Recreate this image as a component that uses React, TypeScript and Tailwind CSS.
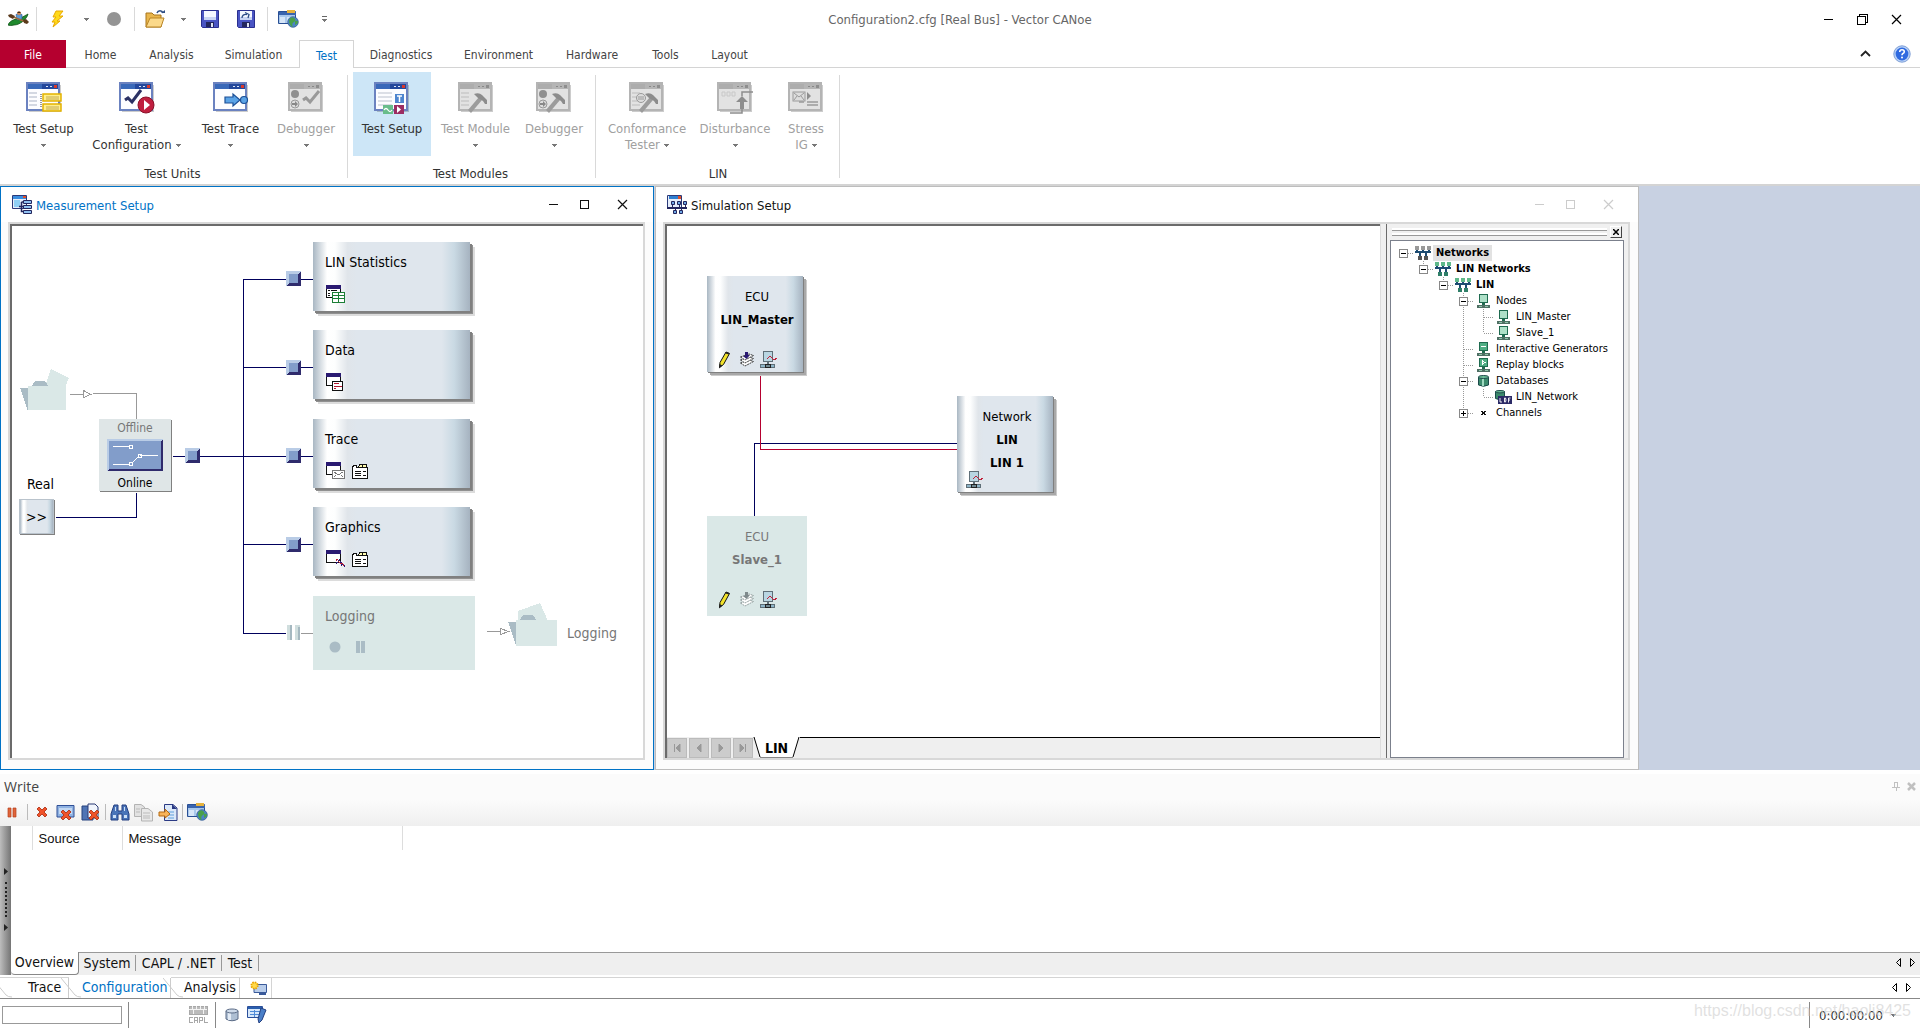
import React from "react";

type Kids = { children?: React.ReactNode };

/* ---------- small glyphs ---------- */

const Caret = ({ className = "" }: { className?: string }) => (
  <svg width="5" height="3" viewBox="0 0 5 3" className={className} shapeRendering="crispEdges">
    <path d="M0 0H5L3 3H2Z" fill="#777" />
  </svg>
);

const Sep = ({ className = "h-6" }: { className?: string }) => (
  <span className={`w-px shrink-0 bg-[#d9d9d9] ${className}`} />
);

const MinIcon = () => (
  <svg width="11" height="11" viewBox="0 0 11 11" shapeRendering="crispEdges">
    <path d="M1 5.5H10" stroke="currentColor" />
  </svg>
);
const MaxIcon = () => (
  <svg width="11" height="11" viewBox="0 0 11 11" shapeRendering="crispEdges">
    <path d="M1.5 1.5H9.5V9.5H1.5Z" stroke="currentColor" fill="none" />
  </svg>
);
const RestoreIcon = () => (
  <svg width="11" height="11" viewBox="0 0 11 11" shapeRendering="crispEdges">
    <path d="M.5 2.5H8.5V10.5H.5ZM2.5 2.5V.5H10.5V8.5H8.5" stroke="currentColor" fill="none" />
  </svg>
);
const CloseIcon = () => (
  <svg width="11" height="11" viewBox="0 0 11 11">
    <path d="M1 1L10 10M10 1L1 10" stroke="currentColor" strokeWidth="1.2" />
  </svg>
);

/* ---------- quick access icons ---------- */

const BoatIcon = () => (
  <svg width="21" height="16" viewBox="0 0 21 16">
    <path d="M0 14C2 9 8 8 12 7C15 6 18 4 20 3C19 8 12 14 6 14Q2 15 0 14Z" fill="#1f8a2d" stroke="#0f5118" strokeWidth=".8" />
    <path d="M8 3.500Q11 1.500 14 3.500L14 8L9 9Z" fill="#5b9bd8" stroke="#27538c" strokeWidth=".6" />
    <circle cx="11" cy="2.300" r="2" fill="#c98a5b" />
    <path d="M9 2q2 -3 4 0z" fill="#3c2a18" />
    <path d="M3 5L18 11" stroke="#a0693a" strokeWidth="1.500" />
    <path d="M0 4L3 3L7 5L5 8L1 6Z" fill="#5b3a1c" />
    <path d="M15 9L18 8L21 11L19 13L16 12Z" fill="#5b3a1c" />
  </svg>
);

const BoltIcon = () => (
  <svg width="14" height="18" viewBox="0 0 14 18">
    <path d="M5 1H12L8 6H12L6 11H9L2 17L4 12H1L5 7H2Z" fill="#ffd91a" stroke="#e8a800" strokeWidth="1" strokeLinejoin="round" />
  </svg>
);

const OpenIcon = () => (
  <svg width="22" height="20" viewBox="0 0 22 20">
    <path d="M2 4h6l2 2h7v12H2z" fill="#e9b64d" stroke="#a8741c" />
    <path d="M2 18L6 9H20L17 18Z" fill="#fbd98a" stroke="#b98526" />
    <path d="M13 4C14 1 18 1 19 4" fill="none" stroke="#2f4f86" strokeWidth="1.5" />
    <path d="M17 4h4v-3z" fill="#2f4f86" />
  </svg>
);

const SaveIcon = ({ arrow = false }: { arrow?: boolean }) => (
  <svg width="18" height="18" viewBox="0 0 18 18">
    <path d="M.5 .5H17.5V17.5H1.5L.5 16.5Z" fill="#4a55c4" stroke="#2a2f8f" />
    <path d="M3 1H15V10H3Z" fill="#f4f7ff" />
    <path d="M3 7H15V10H3Z" fill="#c9d4f3" />
    <path d="M5 12H13V17H5Z" fill="#23265e" />
    <path d="M10 13H12V17H10Z" fill="#dfe4f5" />
    {arrow && (
      <g fill="none" stroke="#2c4c86" strokeWidth="1.300">
        <path d="M5 8Q5 4 10 4.500" />
        <path d="M8 2.500L12 4.500L11 8" />
      </g>
    )}
  </svg>
);

const FolderGlobeIcon = () => (
  <svg width="21" height="18" viewBox="0 0 21 18">
    <path d="M.5 1.5H17.5V13.5H.5Z" fill="#a9c8ec" stroke="#294f94" />
    <path d="M1 2H18V5H1Z" fill="#3a64ad" />
    <path d="M9 0H17V3H9Z" fill="#e6b33e" />
    <path d="M2 7H7V13H2ZM9 7H14V13H9Z" fill="#d7e6f8" />
    <circle cx="15" cy="12" r="5.3" fill="#4c84c6" stroke="#2f568f" strokeWidth=".7" />
    <path d="M11 10q2 -4 5 -2t0 4t-1 5q-4 -1 -4 -7zM17 11q3 -1 3 1t-3 3z" fill="#4aa04a" />
  </svg>
);

const HelpIcon = () => (
  <svg width="18" height="18" viewBox="0 0 18 18">
    <circle cx="9" cy="9" r="8.2" fill="#b9d2f7" stroke="#7f9fd6" />
    <circle cx="9" cy="9" r="6.4" fill="#2f6ae0" />
    <path d="M6.7 7Q6.8 4.8 9 4.8T11.3 6.8Q11.2 8 9.9 8.6Q9 9 9 10.3" fill="none" stroke="#fff" strokeWidth="1.6" />
    <circle cx="9" cy="12.6" r="1" fill="#fff" />
  </svg>
);

/* ---------- ribbon icons ---------- */

const RibbonIcon = ({ gray = false, children }: Kids & { gray?: boolean }) => (
  <svg width="38" height="34" viewBox="0 0 38 34">
    <path d="M3 29H34V3H35V30H3Z" fill="#000" opacity=".2" />
    <path d="M1 1H33V28H1Z" fill={gray ? "#e2e2e2" : "#fdfdff"} stroke={gray ? "#b4b4b4" : "#6b82c0"} strokeWidth="2" />
    <path d="M2 2H32V7H2Z" fill={gray ? "#b5b5b5" : "#24489c"} />
    <path d="M2 2H16V7H2Z" fill={gray ? "#a6a6a6" : "#4f8ad6"} opacity=".5" />
    <path d="M20 4H22V5H20ZM24 4H26V5H24Z" fill={gray ? "#888" : "#dfe6f5"} />
    <path d="M28 3H31V6H28Z" fill={gray ? "#8e8e8e" : "#d8382b"} />
    {children}
  </svg>
);

const ListLines = ({ x = 3, w = 8, color = "#d4d8e2" }: { x?: number; w?: number; color?: string }) => (
  <g fill={color}>
    <rect x={x} y="10" width={w} height="2" />
    <rect x={x} y="14" width={w} height="2" />
    <rect x={x} y="18" width={w} height="2" />
    <rect x={x} y="22" width={w} height="2" />
  </g>
);

const Hammer = () => (
  <g>
    <path d="M10 28L21 15L24 18L13 31Z" fill="#9c9c9c" />
    <path d="M16 12Q21 10 24 13L29 18V22H27L25 19L20 16Z" fill="#8c8c8c" />
  </g>
);

const UnitSetupIcon = () => (
  <RibbonIcon>
    <ListLines />
    {[12, 22].map((y) => (
      <g key={y}>
        <path d={`M17 ${y}H35V${y + 7}H17Z`} fill="#ffef8a" stroke="#e3b200" strokeWidth="1.5" />
        <path d={`M20 ${y + 3}H33M20 ${y + 5}H33`} stroke="#b59a4a" strokeWidth=".8" />
      </g>
    ))}
    <path d="M15 12V26" stroke="#333" strokeDasharray="1 1" />
  </RibbonIcon>
);

const UnitConfigIcon = () => (
  <RibbonIcon>
    <path d="M6 18L9 16L13 20L22 8" fill="none" stroke="#2b3064" strokeWidth="3" />
    <circle cx="27" cy="23" r="8" fill="#c01f3f" stroke="#8a1029" />
    <path d="M25 18L31 23L25 28Z" fill="#fff" />
  </RibbonIcon>
);

const UnitTraceIcon = () => (
  <RibbonIcon>
    <path d="M12 15H20V12L27 18L20 24V21H12Z" fill="#5ba3e6" stroke="#1c4f96" strokeWidth="1.2" />
    <circle cx="31" cy="18" r="3.5" fill="#5ba3e6" stroke="#1c4f96" strokeWidth="1.2" />
  </RibbonIcon>
);

const UnitDebugIcon = () => (
  <RibbonIcon gray>
    <circle cx="7" cy="12" r="4" fill="#8f8f8f" />
    <circle cx="7" cy="22" r="4" fill="#ddd" stroke="#999" />
    <path d="M4 21H7V19L10 22L7 25V23H4Z" fill="#888" />
    <path d="M15 18L18 16L22 20L31 9" fill="none" stroke="#999" strokeWidth="3" />
  </RibbonIcon>
);

const ModuleSetupIcon = () => (
  <RibbonIcon>
    <ListLines x={4} w={14} color="#dcdfe6" />
    <rect x="21" y="12" width="9" height="9" fill="#4f86cf" />
    <path d="M23 14H28M25.500 14V20" stroke="#fff" strokeWidth="1.5" />
    <rect x="9" y="23" width="10" height="9" fill="#69bd8b" />
    <path d="M10 28Q12 25 14 28T18 28" fill="none" stroke="#fff" strokeWidth="1.3" />
    <rect x="20" y="23" width="10" height="9" fill="#9c2d62" />
    <path d="M23 24L27 27.500L23 31Z" fill="#fff" />
  </RibbonIcon>
);

const ModuleIcon = () => (
  <RibbonIcon gray>
    <ListLines color="#cfcfcf" />
    <Hammer />
  </RibbonIcon>
);

const ModuleDebugIcon = () => (
  <RibbonIcon gray>
    <circle cx="7" cy="12" r="4" fill="#8f8f8f" />
    <circle cx="7" cy="22" r="4" fill="#ddd" stroke="#999" />
    <path d="M4 21H7V19L10 22L7 25V23H4Z" fill="#888" />
    <Hammer />
  </RibbonIcon>
);

const ConformanceIcon = () => (
  <RibbonIcon gray>
    <ListLines color="#cfcfcf" />
    <circle cx="12" cy="16" r="4.500" fill="#ddd" stroke="#999" />
    <path d="M9 15H15M9 17H15" stroke="#999" />
    <Hammer />
  </RibbonIcon>
);

const DisturbanceIcon = () => (
  <RibbonIcon gray>
    <path d="M5 10H8V14H5ZM10 10H13V14H10ZM15 10H18V14H15Z" fill="none" stroke="#c8c8c8" />
    <path d="M13 31H25V27M25 14V10H36" fill="none" stroke="#8d8d8d" strokeWidth="1.500" />
    <path d="M23 27V20H19L25 14L31 20H27V27Z" fill="#8d8d8d" />
  </RibbonIcon>
);

const StressIcon = () => (
  <RibbonIcon gray>
    <rect x="5" y="10" width="12" height="9" fill="#ddd" stroke="#9a9a9a" />
    <path d="M6 11L11 15L16 11M6 18L9 14M16 18L13 14" fill="none" stroke="#9a9a9a" />
    <path d="M19 10L23 14L19 18Z" fill="#8d8d8d" />
    <path d="M19 20H30M19 23H30M11 20H16" stroke="#9a9a9a" strokeWidth="1.500" />
  </RibbonIcon>
);

/* ---------- ribbon ---------- */

interface RibbonButtonProps {
  icon: React.ReactNode;
  label: string;
  second?: string;
  width: string;
  active?: boolean;
  disabled?: boolean;
  plain?: boolean;
}

const RibbonButton: React.FC<RibbonButtonProps> = ({ icon, label, second, width, active, disabled, plain }) => (
  <button
    disabled={disabled}
    className={`flex h-[84px] flex-col items-center pt-[10px] text-[13px] leading-4 ${width} ${
      active ? "bg-[#cde6f7]" : ""
    } ${disabled ? "text-[#a0a0a0]" : "text-[#333]"}`}
  >
    <span className="flex h-[39px] pl-0.5">{icon}</span>
    <span className="whitespace-nowrap">{label}</span>
    {!plain && (
      <span className="flex h-4 items-center gap-1 whitespace-nowrap">
        {second}
        <Caret />
      </span>
    )}
  </button>
);

const RibbonGroup = ({ title, className, children }: Kids & { title: string; className: string }) => (
  <>
    <section className={`flex flex-col pt-1 ${className}`}>
      <div className="flex">{children}</div>
      <h2 className="mt-[10px] text-center text-[13px] leading-4 text-[#333]">{title}</h2>
    </section>
    <Sep className="mt-[7px] h-[103px]" />
  </>
);

const tabs = [
  { name: "File", width: "w-[66px]" },
  { name: "Home", width: "w-[69px]" },
  { name: "Analysis", width: "w-[73px]" },
  { name: "Simulation", width: "w-[91px]" },
  { name: "Test", width: "w-[55px]" },
  { name: "Diagnostics", width: "w-[94px]" },
  { name: "Environment", width: "w-[101px]" },
  { name: "Hardware", width: "w-[86px]" },
  { name: "Tools", width: "w-[61px]" },
  { name: "Layout", width: "w-[67px]" },
];

const tabStyle = (name: string) => {
  if (name === "File") return "bg-[#b5002f] text-white";
  if (name === "Test") return "border-x border-t border-[#d4d4d4] bg-white text-[#0072c6]";
  return "border-b border-[#d4d4d4] text-[#444]";
};

const TitleBar = () => (
  <header className="grid h-10 grid-cols-[1fr_auto_1fr] items-center">
    <div className="flex h-[38px] items-center self-start">
      <button aria-label="CANoe" className="flex w-9 justify-center"><BoatIcon /></button>
      <Sep />
      <button aria-label="Start" className="flex w-[41px] justify-center"><BoltIcon /></button>
      <button aria-label="Start options" className="flex w-4 justify-center"><Caret /></button>
      <button aria-label="Stop" className="flex w-10 justify-center">
        <span className="size-[14px] rounded-full bg-[#949494]" />
      </button>
      <Sep />
      <button aria-label="Open" className="flex w-10 justify-center"><OpenIcon /></button>
      <button aria-label="Open recent" className="flex w-[17px] justify-center"><Caret /></button>
      <button aria-label="Save" className="flex w-9 justify-center"><SaveIcon /></button>
      <button aria-label="Save as" className="flex w-9 justify-center"><SaveIcon arrow /></button>
      <span className="w-[3px]" />
      <Sep />
      <button aria-label="Write options" className="flex w-[41px] justify-center"><FolderGlobeIcon /></button>
      <button aria-label="Customize" className="flex w-[30px] flex-col items-center gap-0.5">
        <span className="h-px w-[5px] bg-[#666]" />
        <Caret />
      </button>
    </div>
    <h1 className="text-[13px] text-[#666]">Configuration2.cfg [Real Bus] - Vector CANoe</h1>
    <div className="flex justify-end gap-[23px] pb-0.5 pr-[18px]">
      <button aria-label="Minimize"><MinIcon /></button>
      <button aria-label="Restore"><RestoreIcon /></button>
      <button aria-label="Close"><CloseIcon /></button>
    </div>
  </header>
);

const Ribbon = () => (
  <>
    <nav className="flex h-7">
      {tabs.map((t) => (
        <button key={t.name} className={`shrink-0 pt-0.5 text-xs ${t.width} ${tabStyle(t.name)}`}>
          {t.name}
        </button>
      ))}
      <div className="flex flex-1 items-center justify-end gap-[22px] border-b border-[#d4d4d4] pr-[9px]">
        <button aria-label="Collapse ribbon">
          <svg width="11" height="7" viewBox="0 0 11 7">
            <path d="M1 6L5.500 1.500L10 6" fill="none" stroke="#222" strokeWidth="1.800" />
          </svg>
        </button>
        <button aria-label="Help"><HelpIcon /></button>
      </div>
    </nav>
    <div className="flex h-[118px] border-b-2 border-[#d4d4d4]">
      <RibbonGroup title="Test Units" className="pl-1 pr-[6px]">
        <RibbonButton icon={<UnitSetupIcon />} label="Test Setup" width="w-[79px]" />
        <RibbonButton icon={<UnitConfigIcon />} label="Test" second="Configuration" width="w-[107px]" />
        <RibbonButton icon={<UnitTraceIcon />} label="Test Trace" width="w-[81px]" />
        <RibbonButton icon={<UnitDebugIcon />} label="Debugger" width="w-[70px]" disabled />
      </RibbonGroup>
      <RibbonGroup title="Test Modules" className="pl-[5px] pr-[7px]">
        <RibbonButton icon={<ModuleSetupIcon />} label="Test Setup" width="w-[78px]" active plain />
        <RibbonButton icon={<ModuleIcon />} label="Test Module" width="w-[89px]" disabled />
        <RibbonButton icon={<ModuleDebugIcon />} label="Debugger" width="w-[68px]" disabled />
      </RibbonGroup>
      <RibbonGroup title="LIN" className="pl-[6px] pr-[5px]">
        <RibbonButton icon={<ConformanceIcon />} label="Conformance" second="Tester" width="w-[90px]" disabled />
        <RibbonButton icon={<DisturbanceIcon />} label="Disturbance" width="w-[86px]" disabled />
        <RibbonButton icon={<StressIcon />} label="Stress" second="IG" width="w-[56px]" disabled />
      </RibbonGroup>
    </div>
  </>
);

/* ---------- MDI windows ---------- */

interface ChildWindowProps extends Kids {
  title: string;
  icon: React.ReactNode;
  active?: boolean;
}

const ChildWindow: React.FC<ChildWindowProps> = ({ title, icon, active, children }) => (
  <section
    className={`flex min-w-0 flex-col border bg-[#fcfcfc] pb-[9px] ${active ? "mr-px border-[#0072c6]" : "border-[#bdbdbd]"}`}
  >
    <div className={`flex h-[35px] items-center bg-white pl-[11px] ${active ? "pr-[25px]" : "pr-6"}`}>
      {icon}
      <h2 className={`ml-1 flex-1 pt-0.5 text-[13px] ${active ? "text-[#0072c6]" : "text-[#111]"}`}>{title}</h2>
      <div className={`flex ${active ? "text-[#111]" : "text-[#ccc]"}`}>
        <button aria-label="Minimize" className="mr-5"><MinIcon /></button>
        <button aria-label="Maximize" className="mr-[27px]"><MaxIcon /></button>
        <button aria-label="Close"><CloseIcon /></button>
      </div>
    </div>
    <div className="ml-[7px] mr-2 flex flex-1 border-2 border-[#d8d8d8]">{children}</div>
  </section>
);

const MeasureIcon = () => (
  <svg width="20" height="19" viewBox="0 0 20 19">
    <path d="M.5 .5H14.500V13.500H.5Z" fill="#e6eefb" stroke="#2a3a7a" />
    <path d="M1 1H14V4H1Z" fill="#3a8ee0" />
    <path d="M11 1H14V3H11Z" fill="#e0502a" />
    <path d="M2 5H8V12H2Z" fill="#8fd0f5" />
    <path d="M7 11.500H12M9.500 7V16.500H12M9.500 7H12" fill="none" stroke="#23265e" strokeWidth="1.500" />
    <path d="M11.500 5.500H19.500V8.500H11.500ZM11.500 10.500H19.500V13.500H11.500ZM11.500 15.500H19.500V18.500H11.500Z" fill="#8fc0f0" stroke="#23265e" />
  </svg>
);

const SimulationIcon = () => (
  <svg width="20" height="19" viewBox="0 0 20 19">
    <path d="M.5 .5H14.500V13.500H.5Z" fill="#e6eefb" stroke="#2a3a7a" />
    <path d="M2 1H11V4H2Z" fill="#2f7fd0" />
    <path d="M11 1H14V4H11Z" fill="#e0502a" />
    <path d="M0 12H20V14H0ZM5 9H6V12H5ZM12 9H13V12H12ZM18 9H19V12H18ZM8 14H9V16H8ZM14 14H15V16H14Z" fill="#23265e" />
    <path d="M4.500 6.500H7.500V9.500H4.500ZM10.500 6.500H13.500V9.500H10.500ZM16.500 6.500H19.500V9.500H16.500ZM6.500 15.500H9.500V18.500H6.500ZM12.500 15.500H15.500V18.500H12.500Z" fill="#6fa9e6" stroke="#23265e" />
  </svg>
);

const panel =
  "bg-[linear-gradient(to_right,#a9b7c3_0%,#ffffff_9%,#fdfefe_14%,#e0e5ea_22%,#dfe6ed_28%,#dfe6ed_82%,#c9d9e3_90%,#a6b3c0_100%)]";

/* block icons of the measurement chain */

const BlockWindow = ({ children }: Kids) => (
  <svg width="20" height="19" viewBox="0 0 20 19" shapeRendering="crispEdges">
    <path d="M.5 .5H14.500V12.500H.5Z" fill="#fff" stroke="#111" />
    <path d="M0 0H15V4H0Z" fill="#2a1a72" />
    {children}
  </svg>
);

const StatisticsIcon = () => (
  <BlockWindow>
    <path d="M2 5.500H4M5 5.500H11M2 8.500H4M2 10.500H4" stroke="#111" />
    <path d="M6.500 7.500H18.500V17.500H6.500Z" fill="#fff" stroke="#1b7f35" />
    <path d="M6 10.500H19M6 13.500H19M12.500 7V18" stroke="#1b7f35" />
  </BlockWindow>
);
const DataIcon = () => (
  <BlockWindow>
    <path d="M6.500 8.500H16.500V17.500H6.500Z" fill="#fff" stroke="#111" />
    <path d="M8 10.500H13M8 13.500H16M8 15.500H10" stroke="#b3152f" />
  </BlockWindow>
);
const MailIcon = () => (
  <BlockWindow>
    <path d="M6.500 8.500H18.500V16.500H6.500Z" fill="#fff" stroke="#777" />
    <path d="M8 10L12 13L17 10M8 15L10 13M17 15L15 13" fill="none" stroke="#777" />
  </BlockWindow>
);
const CurveIcon = () => (
  <BlockWindow>
    <path d="M10 10L12 9L15 14L19 15" fill="none" stroke="#c0203a" strokeWidth="2" strokeDasharray="2 1" />
    <path d="M10 13L14 10L16 15L19 16" fill="none" stroke="#2a1a72" strokeWidth="1.500" strokeDasharray="2 1" />
  </BlockWindow>
);
const NoteIcon = () => (
  <svg width="17" height="16" viewBox="0 0 17 16" shapeRendering="crispEdges">
    <path d="M.5 14.500V2.500H1.500V1.500H4.500V3.500H15.500V14.500Z" fill="#fff" stroke="#111" />
    <path d="M6.500 3.500L7.500 .5H14.500V3.500ZM10.500 .5V3.500" fill="#fffbb0" stroke="#111" />
    <path d="M3 7.500H9M11 7.500H14M3 9.500H9M3 11.500H9M11 11.500H14" stroke="#111" />
  </svg>
);

const blocks = [
  { name: "LIN Statistics", top: "top-[16px]", icon: <StatisticsIcon /> },
  { name: "Data", top: "top-[104px]", icon: <DataIcon /> },
  { name: "Trace", top: "top-[193px]", icon: <MailIcon />, note: true },
  { name: "Graphics", top: "top-[281px]", icon: <CurveIcon />, note: true },
];

const Hotspot = ({ x, y }: { x: number; y: number }) => (
  <g transform={`translate(${x} ${y})`}>
    <path d="M0 0H15V15H0Z" fill="#b9cce6" />
    <path d="M15 0V15H0L3 12H12V3Z" fill="#2f2b6c" />
    <path d="M3 3H12V12H3Z" fill="#829dca" />
  </g>
);

const Folder = ({ flip }: { flip?: boolean }) => (
  <>
    <path d={flip ? "M10 8L32 0L40 18L10 20Z" : "M25 18L31 0L49 9L45 18V30Z"} fill="#dae8e7" />
    <path d="M0 19H8V42ZM11 18L15 12H25L29 18Z" fill="#aabcc5" />
    <path d={flip ? "M8 17H49V43H8Z" : "M8 17H46V41H8Z"} fill="#dae8e7" />
  </>
);

const MeasurementWires = () => (
  <svg width="600" height="450" viewBox="0 0 600 450" className="absolute left-0 top-0" shapeRendering="crispEdges">
    <g fill="none" stroke="#00005c">
      <path d="M161 230.500H301M231.500 53V407.500M231 53.500H301M231 141.500H301M231 318.500H301M231 407.500H274" />
      <path d="M124.500 267V291.500H44" />
    </g>
    <g fill="none" stroke="#999">
      <path d="M58 168.500H71M81 167.500H124.500V193M71.500 164.500L78.500 168.500L71.500 171.500Z" />
      <path d="M289 407.500H301M475 405.500H488M488.500 402.500L496.500 405.500L488.500 408.500Z" />
    </g>
    {[45, 134, 222, 311].map((y) => (
      <Hotspot key={y} x={274} y={y} />
    ))}
    <Hotspot x={173} y={222} />
    <path d="M275 399H280V414H275ZM283 399H288V414H283Z" fill="#d0dede" />
    <path d="M278 399H280V414H278ZM286 401H288V414H286Z" fill="#a5b8c0" />
    <g transform="translate(8 143)"><Folder /></g>
    <g transform="translate(496 377)"><Folder flip /></g>
  </svg>
);

const MeasurementSetup = () => (
  <ChildWindow title="Measurement Setup" icon={<MeasureIcon />} active>
    <div className="relative min-h-[460px] flex-1 overflow-hidden border-l-2 border-t-2 border-[#6b6b6b] bg-white text-sm text-black">
      <MeasurementWires />
      <div className="absolute left-[87px] top-[193px] flex h-[72px] w-[72px] flex-col items-center bg-[#dfe6e7] text-xs leading-4 shadow-[1px_1px_0_#808080]">
        <span className="pt-px text-[#777]">Offline</span>
        <svg width="56" height="32" viewBox="0 0 56 32" className="mt-[3px] shrink-0" shapeRendering="crispEdges">
          <path d="M0 0H56V32H0Z" fill="#b9cce6" />
          <path d="M56 0V32H0L2 30H54V2Z" fill="#2f2b6c" />
          <path d="M2 2H54V30H2Z" fill="#829dca" />
          <path d="M6 7.500H22M6 25.500H22M33 16.500H51M25 24L31 18" stroke="#fff" />
          <path d="M22.500 6.500H25.500V9.500H22.500ZM22.500 23.500H25.500V26.500H22.500ZM31.500 15.500H34.500V18.500H31.500Z" fill="none" stroke="#fff" />
        </svg>
        <span className="pt-1">Online</span>
      </div>
      <span className="absolute left-[15px] top-[248px] whitespace-nowrap leading-5">Real</span>
      <button
        className={`absolute left-[7px] top-[273px] flex h-[35px] w-[35px] items-center justify-center border border-[#b9c3cc] shadow-[1px_1px_0_#808080] ${panel}`}
      >
        &gt;&gt;
      </button>
      {blocks.map((b) => (
        <div
          key={b.name}
          className={`absolute left-[301px] flex h-[69px] w-[157px] flex-col pl-3 pt-[10px] leading-5 shadow-[2px_2px_0_#808080,3px_3px_0_#909090,5px_5px_0_#dcdcdc] ${b.top} ${panel}`}
        >
          <span>{b.name}</span>
          <span className="mt-[13px] flex items-center gap-[6px] pl-px">
            {b.icon}
            {b.note && <NoteIcon />}
          </span>
        </div>
      ))}
      <div className="absolute left-[301px] top-[370px] flex h-[74px] w-[162px] flex-col bg-[#dae8e7] pl-3 pt-[10px] leading-5 text-[#777]">
        Logging
        <svg width="40" height="12" viewBox="0 0 40 12" className="ml-1 mt-[15px]">
          <circle cx="6" cy="6" r="5.500" fill="#aabcc5" />
          <path d="M27 0H31V12H27ZM32 0H36V12H32Z" fill="#aabcc5" />
        </svg>
      </div>
      <span className="absolute left-[555px] top-[397px] leading-5 text-[#777]">Logging</span>
    </div>
  </ChildWindow>
);

/* simulation setup */

const PencilIcon = () => (
  <svg width="13" height="18" viewBox="0 0 13 18">
    <path d="M8 1L11.500 2.500L5.500 13.500L1.500 16.500L2 11.500Z" fill="#f2e22a" stroke="#111" />
    <path d="M1.500 13L4.500 14.500L1 17.500ZM8 1L11.500 2L11 3.500L7.300 2.500Z" fill="#222" />
  </svg>
);
const StackIcon = ({ dim = false }: { dim?: boolean }) => (
  <svg width="16" height="18" viewBox="0 0 16 18">
    {[9, 6, 3].map((y) => (
      <path
        key={y}
        d={`M1.500 ${y + 3}L10 ${y}L14.500 ${y + 1.5}L6 ${y + 6}Z`}
        fill="#fff"
        stroke={dim ? "#8a9696" : "#222"}
        strokeDasharray="2 .7"
        strokeWidth=".9"
      />
    ))}
    <path d="M6 1H9V4H11L7.500 8L4 5H6Z" fill={dim ? "#7f8a8c" : "#2a1a72"} />
  </svg>
);
const NodeIcon = () => (
  <svg width="17" height="18" viewBox="0 0 17 18" shapeRendering="crispEdges">
    <path d="M3.500 .5H12.500V10.500H3.500Z" fill="#b9d6e2" stroke="#5f6f78" />
    <path d="M7 11H9V14H7Z" fill="#5f6f78" />
    <path d="M.5 13.500H14.500V16.500H.5Z" fill="#8fb6c9" stroke="#5f6f78" />
    <path d="M5.500 13.500H10.500V16.500H5.500Z" fill="#6f8790" stroke="#222" />
    <path d="M7 7H8V6H9V5H11V6H12V7H13V8H15V7H17V8H16V9H13V8H12V7H11V6H9V7H8V8H7Z" fill="#c0203a" />
  </svg>
);

const nodeShadow = "shadow-[1px_1px_0_#808080,3px_3px_0_#a8a8a8,4px_4px_0_#ccc]";

const SimCanvas = () => (
  <div className="relative min-h-[400px] flex-1 overflow-hidden bg-white text-[13px] leading-[23px] text-black">
    <svg width="400" height="400" viewBox="0 0 400 400" className="absolute left-0 top-0" fill="none" shapeRendering="crispEdges">
      <path d="M87.500 290V217.500H290" stroke="#00005c" />
      <path d="M93.500 150V223.500H290" stroke="#b5002f" />
    </svg>
    <div className={`absolute left-[40px] top-[50px] flex h-24 w-24 flex-col items-center pl-1 pt-[9px] ${panel} ${nodeShadow}`}>
      <span>ECU</span>
      <b>LIN_Master</b>
      <span className="mt-5 flex w-full items-center pl-[7px]">
        <PencilIcon />
        <span className="ml-2 mr-[5px]"><StackIcon /></span>
        <NodeIcon />
      </span>
    </div>
    <div className={`absolute left-[290px] top-[170px] flex h-24 w-24 flex-col items-center pl-1 pt-[9px] ${panel} ${nodeShadow}`}>
      <span>Network</span>
      <b>LIN</b>
      <b>LIN 1</b>
      <span className="-mt-[3px] w-full pl-[5px]"><NodeIcon /></span>
    </div>
    <div className="absolute left-[40px] top-[290px] flex h-[100px] w-[100px] flex-col items-center bg-[#dae8e7] pt-[9px] text-[#777]">
      <span>ECU</span>
      <b>Slave_1</b>
      <span className="mt-5 flex w-full items-center pl-[11px]">
        <PencilIcon />
        <span className="ml-2 mr-[5px]"><StackIcon dim /></span>
        <NodeIcon />
      </span>
    </div>
  </div>
);

const scrollGlyphs = [
  { label: "First sheet", d: "M7.500 6V14M13 6V14L9 10Z" },
  { label: "Previous sheet", d: "M12 6V14L8 10Z" },
  { label: "Next sheet", d: "M8 6V14L12 10Z" },
  { label: "Last sheet", d: "M12.500 6V14M7 6V14L11 10Z" },
];

const SheetTabs = () => (
  <div className="flex h-[21px] bg-[#efefef]">
    <div className="flex gap-0.5 pt-px">
      {scrollGlyphs.map((g) => (
        <button key={g.label} aria-label={g.label} className="h-5 w-5 border border-[#bbb] bg-[#ccc]">
          <svg width="18" height="18" viewBox="1 1 18 18">
            <path d={g.d} fill="#999" stroke="#999" />
          </svg>
        </button>
      ))}
    </div>
    <button className="relative w-[47px] text-sm font-bold leading-5">
      <svg width="47" height="21" viewBox="0 0 47 21" className="absolute left-0 top-0">
        <path d="M1 0L7 20H40L46 0Z" fill="#fff" />
        <path d="M1 0L7 20M40 20L46 0" stroke="#000" />
        <path d="M7 20.500H40" stroke="#888" />
      </svg>
      <span className="relative">LIN</span>
    </button>
    <div className="flex-1 border-t border-black" />
  </div>
);

/* network tree */

const NetIcon = ({ root = false }: { root?: boolean }) => (
  <svg width="16" height="14" viewBox="0 0 16 14" shapeRendering="crispEdges">
    <path d="M0 5H16V7H0ZM1 3H3V6H1ZM7 3H9V6H7ZM13 3H15V6H13ZM4 7H6V10H4ZM10 7H12V10H10Z" fill="#1d4c72" />
    <path d="M0 0H4V4H0ZM6 0H10V4H6ZM12 0H16V4H12Z" fill={root ? "#999" : "#5fb98a"} />
    <path d="M3 10H7V14H3ZM9 10H13V14H9Z" fill={root ? "#555" : "#2f7f68"} />
  </svg>
);
const GreenNode = ({ mark }: { mark?: string }) => (
  <svg width="13" height="14" viewBox="0 0 13 14" shapeRendering="crispEdges">
    <path d="M2.500 .5H10.500V8.500H2.500Z" fill={mark ? "#4fae84" : "#aee0c8"} stroke="#1f6b50" />
    <path d="M5 9H8V12H5Z" fill="#1f6b50" />
    <path d="M0 11H13V14H0Z" fill="#4f6f64" />
    <path d="M2 12H5V13H2ZM8 12H11V13H8Z" fill="#8fc4ab" />
    {mark && <path d={mark} fill="none" stroke="#fff" />}
  </svg>
);
const DbIcon = () => (
  <svg width="11" height="12" viewBox="0 0 11 12">
    <path d="M.5 2V10Q5.500 12.500 10.500 10V2Z" fill="#3b8a6c" stroke="#1c4a4a" />
    <path d="M4 3H6V11H4Z" fill="#9fd8bf" />
    <ellipse cx="5.500" cy="2" rx="5" ry="1.500" fill="#6fc09a" stroke="#1c4a4a" />
  </svg>
);
const LdfIcon = () => (
  <svg width="17" height="14" viewBox="0 0 17 14">
    <path d="M.5 1.500V8.500Q5 11 9.500 8.500V1.500Z" fill="#3b8a6c" stroke="#1c4a4a" />
    <ellipse cx="5" cy="1.700" rx="4.500" ry="1.200" fill="#6fc09a" stroke="#1c4a4a" />
    <path d="M3 6H17V14H3Z" fill="#2b2a66" />
    <path d="M5 8V12H7M9.500 8V12H10.500Q11.500 10 10.500 8ZM13.500 12.500V8H15.500M13.500 10H15" fill="none" stroke="#fff" strokeWidth=".9" />
  </svg>
);
const ChannelIcon = () => (
  <svg width="5" height="4" viewBox="0 0 5 4" shapeRendering="crispEdges">
    <path d="M0 0H2V1H3V0H5V1H4V3H5V4H3V3H2V4H0V3H1V1H0Z" fill="#111" />
  </svg>
);

interface TreeRowProps {
  name: string;
  icon: React.ReactNode;
  cells: string[];
  bold?: boolean;
  selected?: boolean;
}

const guides: Record<string, string> = {
  " ": "",
  "|": "M9.500 0V16",
  t: "M9.500 0V16M10 8.500H20",
  L: "M9.500 0V8M10 8.500H20",
  "-": "M9.500 0V8M10 8.500H20",
  "=": "M9.500 0V16M10 8.500H20",
  r: "M10 8.500H20",
  "+": "M9.500 0V8M10 8.500H20",
};

const treeRows: TreeRowProps[] = [
  { name: "Networks", icon: <NetIcon root />, cells: ["r"], bold: true, selected: true },
  { name: "LIN Networks", icon: <NetIcon />, cells: [" ", "-"], bold: true },
  { name: "LIN", icon: <NetIcon />, cells: [" ", " ", "-"], bold: true },
  { name: "Nodes", icon: <GreenNode />, cells: [" ", " ", " ", "="] },
  { name: "LIN_Master", icon: <GreenNode />, cells: [" ", " ", " ", "|", "t"] },
  { name: "Slave_1", icon: <GreenNode />, cells: [" ", " ", " ", "|", "L"] },
  { name: "Interactive Generators", icon: <GreenNode mark="M4 5L6 4L7 5L9 4" />, cells: [" ", " ", " ", "t"] },
  { name: "Replay blocks", icon: <GreenNode mark="M5.500 3V6L8 4.500Z" />, cells: [" ", " ", " ", "t"] },
  { name: "Databases", icon: <DbIcon />, cells: [" ", " ", " ", "="] },
  { name: "LIN_Network", icon: <LdfIcon />, cells: [" ", " ", " ", "|", "L"] },
  { name: "Channels", icon: <ChannelIcon />, cells: [" ", " ", " ", "+"] },
];

const TreeRow: React.FC<TreeRowProps> = ({ name, icon, cells, bold, selected }) => (
  <li className="flex h-4 items-center">
    {cells.map((c, i) => (
      <svg key={i} width="20" height="16" viewBox="0 0 20 16" className="shrink-0" shapeRendering="crispEdges">
        <path d={guides[c]} stroke="#999" strokeDasharray="1 1" />
        {"r-=+".includes(c) && c !== " " && (
          <>
            <path d="M5.500 4.500H13.500V12.500H5.500Z" fill="#fff" stroke="#888" />
            <path d={c === "+" ? "M7 8.500H12M9.500 6V11" : "M7 8.500H12"} stroke="#000" />
          </>
        )}
      </svg>
    ))}
    <span className="mr-px flex w-[18px] shrink-0 justify-center">{icon}</span>
    <span className={`whitespace-nowrap px-[3px] ${bold ? "font-bold" : ""} ${selected ? "bg-[#e2e2e2]" : ""}`}>{name}</span>
  </li>
);

const NetworkTree = () => (
  <aside className="flex w-[242px] shrink-0 flex-col border-l border-[#6b6b6b] bg-[#f0f0f0] pl-[3px] pr-1">
    <div className="flex h-4 items-center gap-[3px] px-0.5">
      <div className="flex flex-1 flex-col gap-0.5">
        <span className="h-[3px] border-y border-t-white border-b-[#999] bg-white" />
        <span className="h-[3px] border-y border-t-white border-b-[#999] bg-white" />
      </div>
      <button aria-label="Close tree" className="flex size-3 items-center justify-center border border-b-[#444] border-l-white border-r-[#444] border-t-white bg-[#efefef]">
        <svg width="6" height="6" viewBox="0 0 6 6"><path d="M0 0L6 6M6 0L0 6" stroke="#000" strokeWidth="1.500" /></svg>
      </button>
    </div>
    <ul className="flex-1 overflow-hidden border border-[#7b808c] bg-white pl-[3px] pt-1 text-[11px] leading-4 text-black">
      {treeRows.map((row) => (
        <TreeRow key={row.name} {...row} />
      ))}
    </ul>
  </aside>
);

const SimulationSetup = () => (
  <ChildWindow title="Simulation Setup" icon={<SimulationIcon />}>
    <div className="flex min-w-0 flex-1 flex-col border-l-2 border-t-2 border-[#6b6b6b]">
      <SimCanvas />
      <SheetTabs />
    </div>
    <div className="w-[6px] border-l border-[#ddd] bg-[#f0f0f0]" />
    <NetworkTree />
  </ChildWindow>
);

/* ---------- write window ---------- */

const RedX = () => <path d="M0 2L2 0L5 3L8 0L10 2L7 5L10 8L8 10L5 7L2 10L0 8L3 5Z" fill="#f0532a" stroke="#a8280c" strokeWidth=".8" />;

const writeTools = [
  { label: "Pause", width: "w-[25px]", sep: true, art: <path d="M5 5H8V14H5ZM10 5H13V14H10Z" fill="#e0653a" stroke="#b5401c" strokeWidth=".7" /> },
  { label: "Clear", width: "w-[23px]", art: <g transform="translate(5 4)"><RedX /></g> },
  {
    label: "Clear window",
    width: "w-[26px]",
    art: (
      <>
        <path d="M1 2.500H18V14H1Z" fill="#8fb2e2" stroke="#2f4f96" />
        <path d="M3 5H16V11H3Z" fill="#c3d8f2" />
        <g transform="translate(5 7)"><RedX /></g>
      </>
    ),
  },
  {
    label: "Clear all",
    width: "w-6",
    sep: true,
    art: (
      <>
        <path d="M1 3H12V17H1Z" fill="#4f74b5" stroke="#27437f" />
        <path d="M7 1H14L17 4V15H7Z" fill="#f1f5fc" stroke="#2b3a74" />
        <g transform="translate(8 7)"><RedX /></g>
      </>
    ),
  },
  {
    label: "Find",
    width: "w-[23px]",
    art: (
      <>
        <path d="M1 17V11L4 2H8V8H12V2H16L19 11V17H12V11H8V17Z" fill="#4a74b8" stroke="#243f80" />
        <path d="M3 12H6V15H3ZM14 12H17V15H14ZM5 4H6V8H5ZM14 4H15V8H14Z" fill="#cfe0f6" />
      </>
    ),
  },
  {
    label: "Copy",
    width: "w-6",
    art: (
      <>
        <path d="M1.500 1.500H8L11.500 4V13.500H1.500Z" fill="#e2e2e2" stroke="#b3b3b3" />
        <path d="M8.500 5.500H15L19.500 9V18H8.500Z" fill="#e8e8e8" stroke="#b3b3b3" />
        <path d="M10 10H17M10 13H17M10 15H17M3 6H7M3 9H7" stroke="#bbb" />
      </>
    ),
  },
  {
    label: "Export",
    width: "w-[25px]",
    sep: true,
    art: (
      <>
        <path d="M6.500 1.500H15L19 5V17.500H6.500Z" fill="#dbe8f8" stroke="#2b3a84" />
        <path d="M14 1V6H19Z" fill="#2b3a84" />
        <path d="M10 9H16M10 12H16M10 15H16" stroke="#5fa0dd" />
        <path d="M1 9H7V6L12 11L7 15V13H1Z" fill="#f7b45a" stroke="#b56a12" />
      </>
    ),
  },
];

const Arrows = ({ className }: { className: string }) => (
  <div className={`ml-auto flex items-center gap-[9px] ${className}`}>
    <button aria-label="Scroll left">
      <svg width="5" height="9" viewBox="0 0 5 9"><path d="M4.500 .5V8.500L.5 4.500Z" fill="none" stroke="#000" /></svg>
    </button>
    <button aria-label="Scroll right">
      <svg width="5" height="9" viewBox="0 0 5 9"><path d="M.5 .5V8.500L4.500 4.500Z" fill="none" stroke="#000" /></svg>
    </button>
  </div>
);

const WriteWindow = () => (
  <section className="mt-1 flex flex-col bg-[#fbfbfb]">
    <div className="flex h-[26px] items-center pb-px pl-1 pr-1">
      <h2 className="flex-1 font-['Open_Sans',sans-serif] text-sm text-[#444]">Write</h2>
      <div className="flex gap-[7px] text-[#c0c0c0]">
        <button aria-label="Pin">
          <svg width="8" height="9" viewBox="0 0 8 9" shapeRendering="crispEdges">
            <path d="M2.500 .5H5.500V5.500H2.500ZM0 5.500H8M4 6V9" fill="none" stroke="currentColor" />
          </svg>
        </button>
        <button aria-label="Close write window">
          <svg width="9" height="9" viewBox="0 0 9 9"><path d="M1 1L8 8M8 1L1 8" stroke="currentColor" strokeWidth="2.500" /></svg>
        </button>
      </div>
    </div>
    <div className="flex h-[26px] items-center bg-linear-to-b from-[#fbfbfb] to-[#efefef] pb-0.5">
      {writeTools.map((t) => (
        <React.Fragment key={t.label}>
          <button aria-label={t.label} className={`flex justify-center ${t.width}`}>
            <svg width="20" height="19" viewBox="0 0 20 19" className="shrink-0">{t.art}</svg>
          </button>
          {t.sep && <span className="mx-0.5 h-4 w-px bg-[#bbb]" />}
        </React.Fragment>
      ))}
      <button aria-label="Write options" className="flex w-[25px] justify-center"><FolderGlobeIcon /></button>
    </div>
    <div className="flex">
      <div className="flex w-[11px] shrink-0 flex-col items-center justify-center gap-[7px] bg-linear-to-r from-[#bdbdbd] to-[#757575] pb-0.5">
        <svg width="4" height="7" viewBox="0 0 4 7"><path d="M0 0L4 3.500L0 7Z" fill="#222" /></svg>
        <span className="h-[35px] border-l-2 border-dotted border-[#222]" />
        <svg width="4" height="7" viewBox="0 0 4 7"><path d="M0 0L4 3.500L0 7Z" fill="#222" /></svg>
      </div>
      <div className="flex min-w-0 flex-1 flex-col bg-white">
        <div className="h-[126px]">
          <table className="border-collapse font-['Liberation_Sans',Arial,sans-serif] text-[13px] text-[#111]">
            <thead>
              <tr className="h-6">
                <th aria-label="Kind" className="w-[21px] border-r border-[#ddd] p-0" />
                <th className="w-[90px] border-r border-[#ddd] p-0 pl-[6px] pt-px text-left font-normal">Source</th>
                <th className="w-[280px] border-r border-[#ddd] p-0 pl-[6px] pt-px text-left font-normal">Message</th>
              </tr>
            </thead>
          </table>
        </div>
        <div className="flex h-[23px] items-stretch bg-[#efefef] text-sm leading-4 text-[#111]">
          <button className="w-[68px] rounded-b-sm border-b border-r border-[#888] bg-white pb-0.5">Overview</button>
          <div className="flex flex-1 items-center border-t border-[#999] pb-[3px]">
            <button className="w-[57px] border-r border-[#999]">System</button>
            <button className="w-[86px] border-r border-[#999]">CAPL / .NET</button>
            <button className="w-[37px] border-r border-[#999]">Test</button>
            <Arrows className="pr-[5px]" />
          </div>
        </div>
      </div>
    </div>
  </section>
);

/* ---------- desktop tabs and status bar ---------- */

const desktops = [
  { name: "Trace", pad: "pl-7 w-[69px]" },
  { name: "Configuration", pad: "pl-[13px] w-[102px]", active: true },
  { name: "Analysis", pad: "pl-[13px] w-[69px]" },
];

const DesktopTabs = () => (
  <nav className="mt-0.5 flex h-[22px] items-center border-b border-[#888] text-sm leading-4 text-[#111]">
    {desktops.map((d) => (
      <button
        key={d.name}
        className={`relative h-[21px] whitespace-nowrap border-t pb-0.5 text-left ${d.pad} ${
          d.active ? "border-transparent text-[#0072c6]" : "border-[#d4d4d4]"
        }`}
      >
        {d.name}
        <svg width="20" height="20" viewBox="0 0 20 20" className="absolute -left-2 top-0">
          <path d="M0 0L14 17Q16 19 20 19" fill="none" stroke="#ccc" />
        </svg>
        <span className="absolute inset-y-0 right-0 border-r border-[#ccc]" />
      </button>
    ))}
    <button aria-label="New desktop" className="relative flex h-[21px] w-8 items-center justify-end border-r border-t border-[#d4d4d4] pr-1">
      <svg width="17" height="15" viewBox="0 0 17 15">
        <path d="M4 3.500H16.500V11.500H4Z" fill="#b9cdea" stroke="#3a5a9a" />
        <path d="M9 12H16V14H9Z" fill="#3a5a9a" />
        <circle cx="4.500" cy="4.500" r="3.200" fill="#ffd94a" stroke="#e8a200" strokeDasharray="1.500 1" strokeWidth="1.800" />
      </svg>
    </button>
    <div className="flex h-[21px] flex-1 border-t border-[#d4d4d4]">
      <Arrows className="pb-0.5 pr-[9px]" />
    </div>
  </nav>
);

const StatusBar = () => (
  <footer className="relative flex h-[31px] items-center pl-0.5">
    <input aria-label="Status" className="h-[18px] w-[120px] border border-[#999] bg-white" />
    <span className="ml-[6px] h-[26px] w-px bg-[#888]" />
    <button aria-label="CAPL" disabled className="ml-[59px]">
      <svg width="20" height="19" viewBox="0 0 20 19" shapeRendering="crispEdges">
        <path d="M1 1H19V9H1Z" fill="#bbb" stroke="#a8a8a8" />
        <path d="M4 1V4M8 1V4M12 1V4M16 1V4M1 4.500H19M5 5V9M15 5V9" stroke="#f3f3f3" />
        <path d="M4.500 12.500H1.500V17.500H4.500M6.500 18V12.500H9.500V18M6.500 15.500H9.500M11.500 18V12.500H14.500V15.500H11.500M16.500 12V17.500H19.500" fill="none" stroke="#a8a8a8" />
      </svg>
    </button>
    <span className="ml-[7px] h-[26px] w-px bg-[#888]" />
    <button aria-label="Database" className="ml-[9px]">
      <svg width="14" height="14" viewBox="0 0 14 14">
        <path d="M1 3V11Q7 14.500 13 11V3Z" fill="#aebfd3" stroke="#5a6b86" />
        <path d="M3 4H6V12H3Z" fill="#e3ebf5" />
        <ellipse cx="7" cy="3" rx="6" ry="2" fill="#cfdbea" stroke="#5a6b86" />
      </svg>
    </button>
    <button aria-label="Log" className="ml-2">
      <svg width="20" height="19" viewBox="0 0 20 19">
        <path d="M.5 1.500H15.500V12.500H.5Z" fill="#d7e8fb" stroke="#2a4f9a" />
        <path d="M1 2H15V4H1Z" fill="#2a5fae" />
        <path d="M3 6.500H13M3 9.500H13M7.500 5V12" stroke="#4f8ad6" />
        <path d="M14 3L19 5L15 15L12 18L11 14Z" fill="#4a7fc8" stroke="#243f80" />
      </svg>
    </button>
    <div className="ml-auto flex h-[26px] w-[111px] items-center gap-2 border-l border-[#888] pl-[9px] pt-0.5 text-[13px] text-[#333]">
      0:00:00:00
      <Caret />
    </div>
    <span className="pointer-events-none absolute right-[9px] top-0 font-['Liberation_Sans',Arial,sans-serif] text-base text-[#d4d4d4]/70">
      https://blog.csdn.net/haoli8425
    </span>
  </footer>
);

export default function App() {
  return (
    <div className="flex min-h-screen flex-col bg-white font-['DejaVu_Sans_Condensed','Noto_Sans',sans-serif]">
      <TitleBar />
      <Ribbon />
      <main className="grid flex-1 grid-cols-[655fr_984fr_281fr] bg-[#c8d1e2]">
        <MeasurementSetup />
        <SimulationSetup />
      </main>
      <WriteWindow />
      <DesktopTabs />
      <StatusBar />
    </div>
  );
}
